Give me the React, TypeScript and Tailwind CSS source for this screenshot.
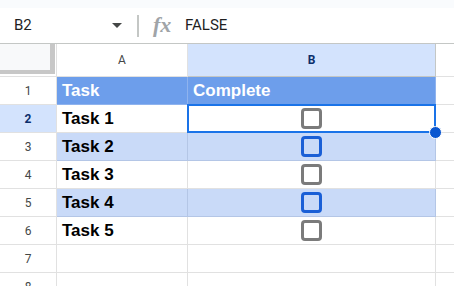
import React from "react";

const rows = [
  { n: 1, a: "Task", b: "Complete", kind: "head" },
  { n: 2, a: "Task 1", kind: "white", box: "gray", sel: true },
  { n: 3, a: "Task 2", kind: "band", box: "blue" },
  { n: 4, a: "Task 3", kind: "white", box: "gray" },
  { n: 5, a: "Task 4", kind: "band", box: "blue" },
  { n: 6, a: "Task 5", kind: "white", box: "gray" },
  { n: 7, a: "", kind: "empty" },
  { n: 8, a: "", kind: "empty" },
];

function Box({ color }: { color: string }) {
  return (
    <div
      className={
        "w-[21px] h-[21px] rounded-[4px] border-[3px] " +
        (color === "blue" ? "border-[#1a5fd6]" : "border-[#7b7b7b]")
      }
    />
  );
}

export default function App() {
  const ff = { fontFamily: "Roboto, 'Liberation Sans', sans-serif" };
  return (
    <div className="w-[454px] h-[286px] overflow-hidden bg-white relative" style={ff}>
      <div className="h-[8px] bg-[#f9fbfd]" />
      <div className="h-[36px] flex items-center border-b border-[#c4c7c5] bg-white">
        <div className="w-[108px] pl-[14px] text-[15px] text-[#1f1f1f]">B2</div>
        <svg width="10" height="5" viewBox="0 0 10 5" className="ml-[4px]">
          <path d="M0 0 L10 0 L5 5 Z" fill="#444746" />
        </svg>
        <div className="ml-[15px] w-[2px] h-[22px] bg-[#c4c7c5]" />
        <div
          className="ml-[14px] w-[22px] text-[22px] italic font-bold text-[#a0a4a8] leading-none pb-[2px]"
          style={{ fontFamily: "'Liberation Serif', serif" }}
        >
          fx
        </div>
        <div className="ml-[10px] text-[15px] text-[#1f1f1f]">FALSE</div>
      </div>
      <div className="grid grid-cols-[57px_131px_248px_1fr] relative">
        <div className="h-[33px] border-b border-r border-[#e1e1e1] bg-white">
          <div className="w-[55px] h-[30px] bg-[#f8f9fa] border-r-[5px] border-b-[4px] border-[#c7c7c7]" />
        </div>
        <div className="h-[33px] border-b border-r border-[#e1e1e1] bg-white flex items-center justify-center text-[12px] text-[#444746]">
          A
        </div>
        <div className="h-[33px] border-b border-r border-[#c4c7c5] bg-[#d3e3fd] flex items-center justify-center text-[12px] font-bold text-[#0b2e6b]">
          B
        </div>
        <div className="h-[33px] border-b border-[#e1e1e1] bg-white" />
        {rows.map((r) => {
          const bg =
            r.kind === "head" ? "bg-[#6d9eeb]" : r.kind === "band" ? "bg-[#c9daf8]" : "bg-white";
          const bc =
            r.kind === "head"
              ? "border-[#8fb3ee]"
              : r.kind === "band"
              ? "border-[#b4c6e6]"
              : "border-[#e1e1e1]";
          const txt = r.kind === "head" ? "text-white" : "text-black";
          return (
            <React.Fragment key={r.n}>
              <div
                className={
                  "h-[28px] border-b border-r border-[#e1e1e1] flex items-center justify-center text-[12px] " +
                  (r.sel ? "bg-[#d3e3fd] font-bold text-[#0b2e6b]" : "bg-white text-[#444746]")
                }
              >
                {r.n}
              </div>
              <div
                className={`h-[28px] border-b border-r ${bc} ${bg} ${txt} flex items-center pl-[5px] text-[17px] font-bold`}
                style={{ fontFamily: "'Liberation Sans', Arial, sans-serif" }}
              >
                {r.a}
              </div>
              <div
                className={`h-[28px] border-b border-r ${bc} ${bg} ${txt} relative flex items-center text-[17px] font-bold ${r.sel ? "z-10" : ""}`}
                style={{ fontFamily: "'Liberation Sans', Arial, sans-serif" }}
              >
                {r.kind === "head" && <span className="pl-[5px]">{r.b}</span>}
                {r.box && (
                  <div className="flex-1 flex justify-center">
                    <Box color={r.box} />
                  </div>
                )}
                {r.sel && (
                  <>
                    <div className="absolute left-[-1px] top-[-1px] w-[249px] h-[29px] border-2 border-[#1a73e8]" />
                    <div className="absolute right-[-7px] bottom-[-7px] w-[13px] h-[13px] rounded-full bg-[#0b57d0] border border-white z-20" />
                  </>
                )}
              </div>
              <div className="h-[28px] border-b border-[#e1e1e1] bg-white" />
            </React.Fragment>
          );
        })}
      </div>
    </div>
  );
}
